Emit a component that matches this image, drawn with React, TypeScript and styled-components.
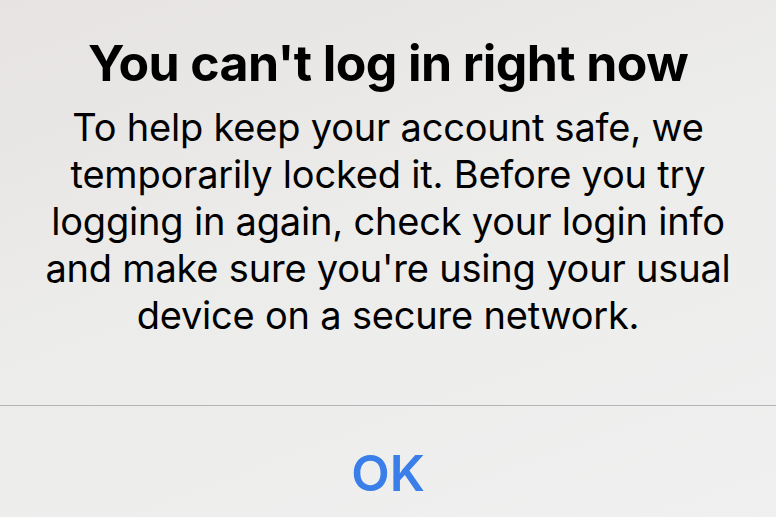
import React from 'react';
import styled, { createGlobalStyle } from 'styled-components';

const GlobalStyle = createGlobalStyle`
  html, body {
    margin: 0;
    padding: 0;
    width: 776px;
    height: 517px;
    overflow: hidden;
  }
  body {
    font-family: Inter, "Noto Sans", sans-serif;
  }
`;

const Alert = styled.div`
  width: 776px;
  height: 517px;
  display: flex;
  flex-direction: column;
  background: linear-gradient(160deg, #e6e3e2 0%, #ececeb 45%, #f0f0f0 100%);
`;

const Content = styled.div`
  height: 405px;
  box-sizing: border-box;
  padding: 33px 20px 0;
  display: flex;
  flex-direction: column;
  align-items: center;
  text-align: center;
`;

const Title = styled.h1`
  margin: 0;
  font-size: 50px;
  font-weight: 700;
  line-height: 60px;
  letter-spacing: -0.6px;
  color: #000;
  white-space: nowrap;
`;

const Message = styled.p`
  margin: 11px 0 0;
  font-size: 38px;
  font-weight: 400;
  line-height: 47px;
  letter-spacing: -0.2px;
  color: #000;
  white-space: nowrap;
`;

const Divider = styled.div`
  height: 1px;
  background: #b4b4b4;
`;

const Button = styled.button`
  flex: 1;
  border: none;
  background: transparent;
  font-family: Inter, "Noto Sans", sans-serif;
  font-size: 50px;
  font-weight: 600;
  color: #3a7ee9;
  padding: 23px 0 0;
  cursor: pointer;
`;

export default function App() {
  return (
    <>
      <GlobalStyle />
      <Alert>
        <Content>
          <Title>You can't log in right now</Title>
          <Message>
            To help keep your account safe, we
            <br />
            temporarily locked it. Before you try
            <br />
            logging in again, check your login info
            <br />
            and make sure you're using your usual
            <br />
            device on a secure network.
          </Message>
        </Content>
        <Divider />
        <Button>OK</Button>
      </Alert>
    </>
  );
}
